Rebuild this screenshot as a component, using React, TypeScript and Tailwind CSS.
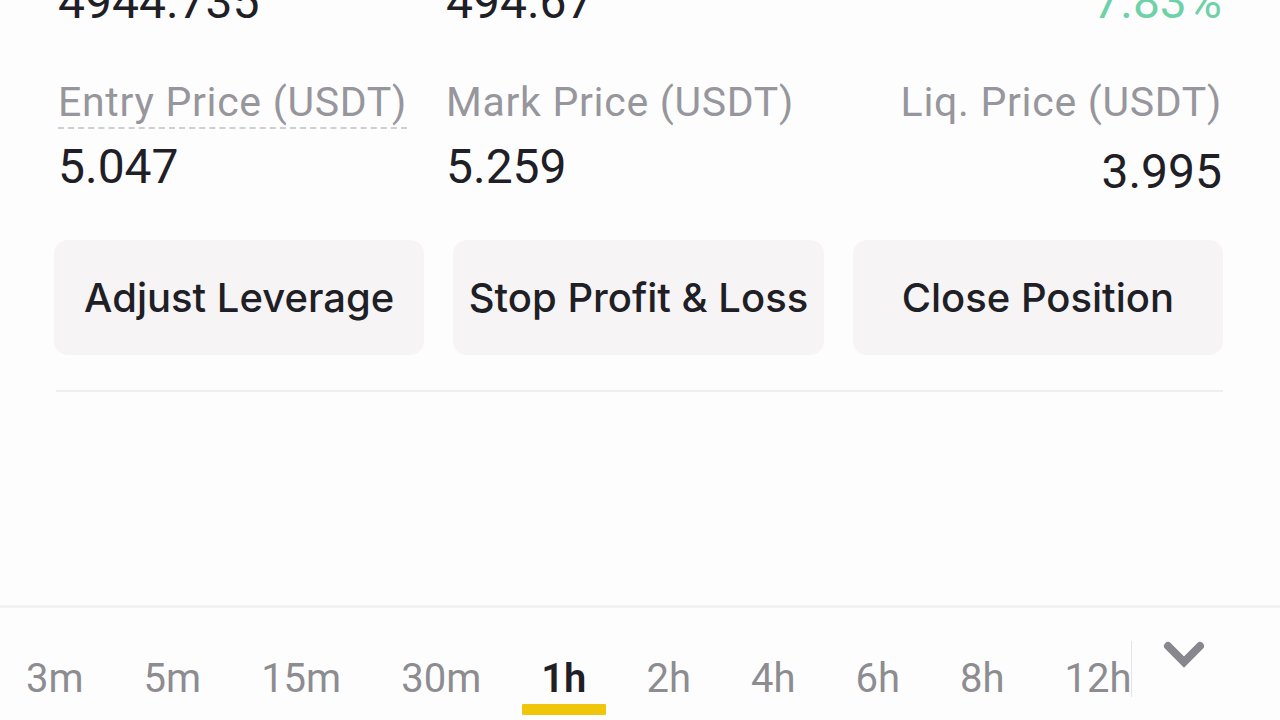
import React from "react";

const tabs = ["3m", "5m", "15m", "30m", "1h", "2h", "4h", "6h", "8h", "12h"];

export default function App() {
  return (
    <div
      className="w-[1280px] h-[720px] overflow-hidden bg-[#fefdfe] flex flex-col"
      style={{ fontFamily: "Roboto, 'Liberation Sans', sans-serif" }}
    >
      {/* top values row (clipped) */}
      <div className="flex items-center h-[56px] mt-[-26px] px-[58px] text-[48px] leading-[56px] text-[#1e2026]">
        <div className="w-[388px]">4944.735</div>
        <div className="flex-1">494.67</div>
        <div className="text-[#6fd1a7]">7.83%</div>
      </div>

      {/* labels */}
      <div className="flex items-start mt-[50px] px-[58px] text-[41px] leading-[44px] tracking-[0.7px] text-[#96969c]">
        <div className="w-[388px]">
          <span className="border-b-2 border-dashed border-[#cfcfd2] pb-[1px]">Entry Price (USDT)</span>
        </div>
        <div className="flex-1">Mark Price (USDT)</div>
        <div>Liq. Price (USDT)</div>
      </div>

      {/* values */}
      <div className="flex items-start mt-[15px] px-[58px] text-[48px] leading-[56px] text-[#1e2026]">
        <div className="w-[388px]">5.047</div>
        <div className="flex-1">5.259</div>
        <div className="mt-[5px]">3.995</div>
      </div>

      {/* buttons */}
      <div
        className="grid grid-cols-3 gap-[29px] pl-[54px] pr-[57px] mt-[40px]"
        style={{ fontFamily: "Inter, 'Noto Sans', sans-serif" }}
      >
        {["Adjust Leverage", "Stop Profit & Loss", "Close Position"].map((t) => (
          <div
            key={t}
            className="h-[115px] rounded-[14px] bg-[#f6f4f5] flex items-center justify-center text-[40px] font-medium text-[#1e2026]"
          >
            {t}
          </div>
        ))}
      </div>

      {/* divider */}
      <div className="ml-[56px] mr-[57px] mt-[35px] h-[2px] bg-[#efeef0]" />

      <div className="flex-1" />

      {/* bottom tab bar */}
      <div className="h-[3px] bg-[#f2f1f3]" />
      <div className="h-[112px] relative flex items-start pl-[26px]">
        <div className="flex gap-[60px] mt-[47px] text-[40px] leading-[48px] text-[#8c8c91]">
          {tabs.map((t) => (
            <div key={t} className="relative flex flex-col items-center">
              <span className={t === "1h" ? "text-[#1e2026] font-semibold" : ""}>{t}</span>
              {t === "1h" && (
                <div className="absolute top-[49px] w-[84px] h-[11px] bg-[#f0c60c] rounded-[1px]" />
              )}
            </div>
          ))}
        </div>
        <div className="absolute left-[1131px] top-[33px] w-[1px] h-[56px] bg-[#e4e3e6]" />
        <svg
          className="absolute left-[1163px] top-[30px]"
          width="42"
          height="32"
          viewBox="0 0 42 32"
        >
          <path
            d="M5 8 L21 24 L37 8"
            fill="none"
            stroke="#88878d"
            strokeWidth="8"
            strokeLinecap="round"
            strokeLinejoin="miter"
          />
        </svg>
      </div>
    </div>
  );
}
